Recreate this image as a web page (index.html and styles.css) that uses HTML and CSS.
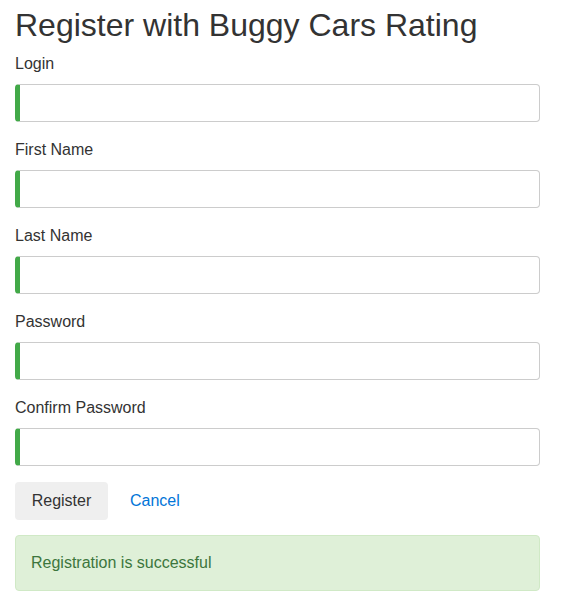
FILE: index.html
```html
<!DOCTYPE html>
<html>
<head>
<meta charset="utf-8">
<link rel="stylesheet" href="styles.css">
</head>
<body>
<div class="container">
  <h1 class="title">Register with Buggy Cars Rating</h1>
  <form class="form">
    <div class="group">
      <label class="label">Login</label>
      <input class="control" type="text">
    </div>
    <div class="group">
      <label class="label">First Name</label>
      <input class="control" type="text">
    </div>
    <div class="group">
      <label class="label">Last Name</label>
      <input class="control" type="text">
    </div>
    <div class="group">
      <label class="label">Password</label>
      <input class="control" type="password">
    </div>
    <div class="group">
      <label class="label">Confirm Password</label>
      <input class="control" type="password">
    </div>
    <div class="actions">
      <button class="btn" type="button">Register</button>
      <a class="link" href="#">Cancel</a>
    </div>
    <div class="alert">Registration is successful</div>
  </form>
</div>
</body>
</html>
```
FILE: styles.css
```css
* { box-sizing: border-box; }
html, body { margin: 0; padding: 0; background: #fff; }
body {
  font-family: "Liberation Sans", Arial, sans-serif;
  font-size: 16px;
  line-height: 1.5;
  color: #333;
}
.container {
  width: 555px;
  padding: 6px 15px 0 15px;
}
.title {
  margin: 0 0 8px 0;
  font-size: 32px;
  font-weight: 400;
  line-height: 1.2;
  color: #333;
}
.form { display: flex; flex-direction: column; }
.group { display: flex; flex-direction: column; margin-bottom: 16px; }
.label { display: block; margin-bottom: 8px; line-height: 24px; }
.control {
  display: block;
  width: 100%;
  height: 38px;
  padding: 6px 12px;
  font: inherit;
  border: 1px solid #ccc;
  border-left: 5px solid #42a948;
  border-radius: 4px;
  background: #fff;
}
.actions { display: flex; align-items: center; gap: 22px; }
.btn {
  width: 93px;
  height: 38px;
  padding: 0;
  font: inherit;
  color: #333;
  background: #efefef;
  border: none;
  border-radius: 4px;
}
.link { color: #0275d8; text-decoration: none; }
.alert {
  margin-top: 15px;
  padding: 15px;
  line-height: 24px;
  background: #dff0d8;
  border: 1px solid #d0e9c6;
  border-radius: 4px;
  color: #3c763d;
}
```
